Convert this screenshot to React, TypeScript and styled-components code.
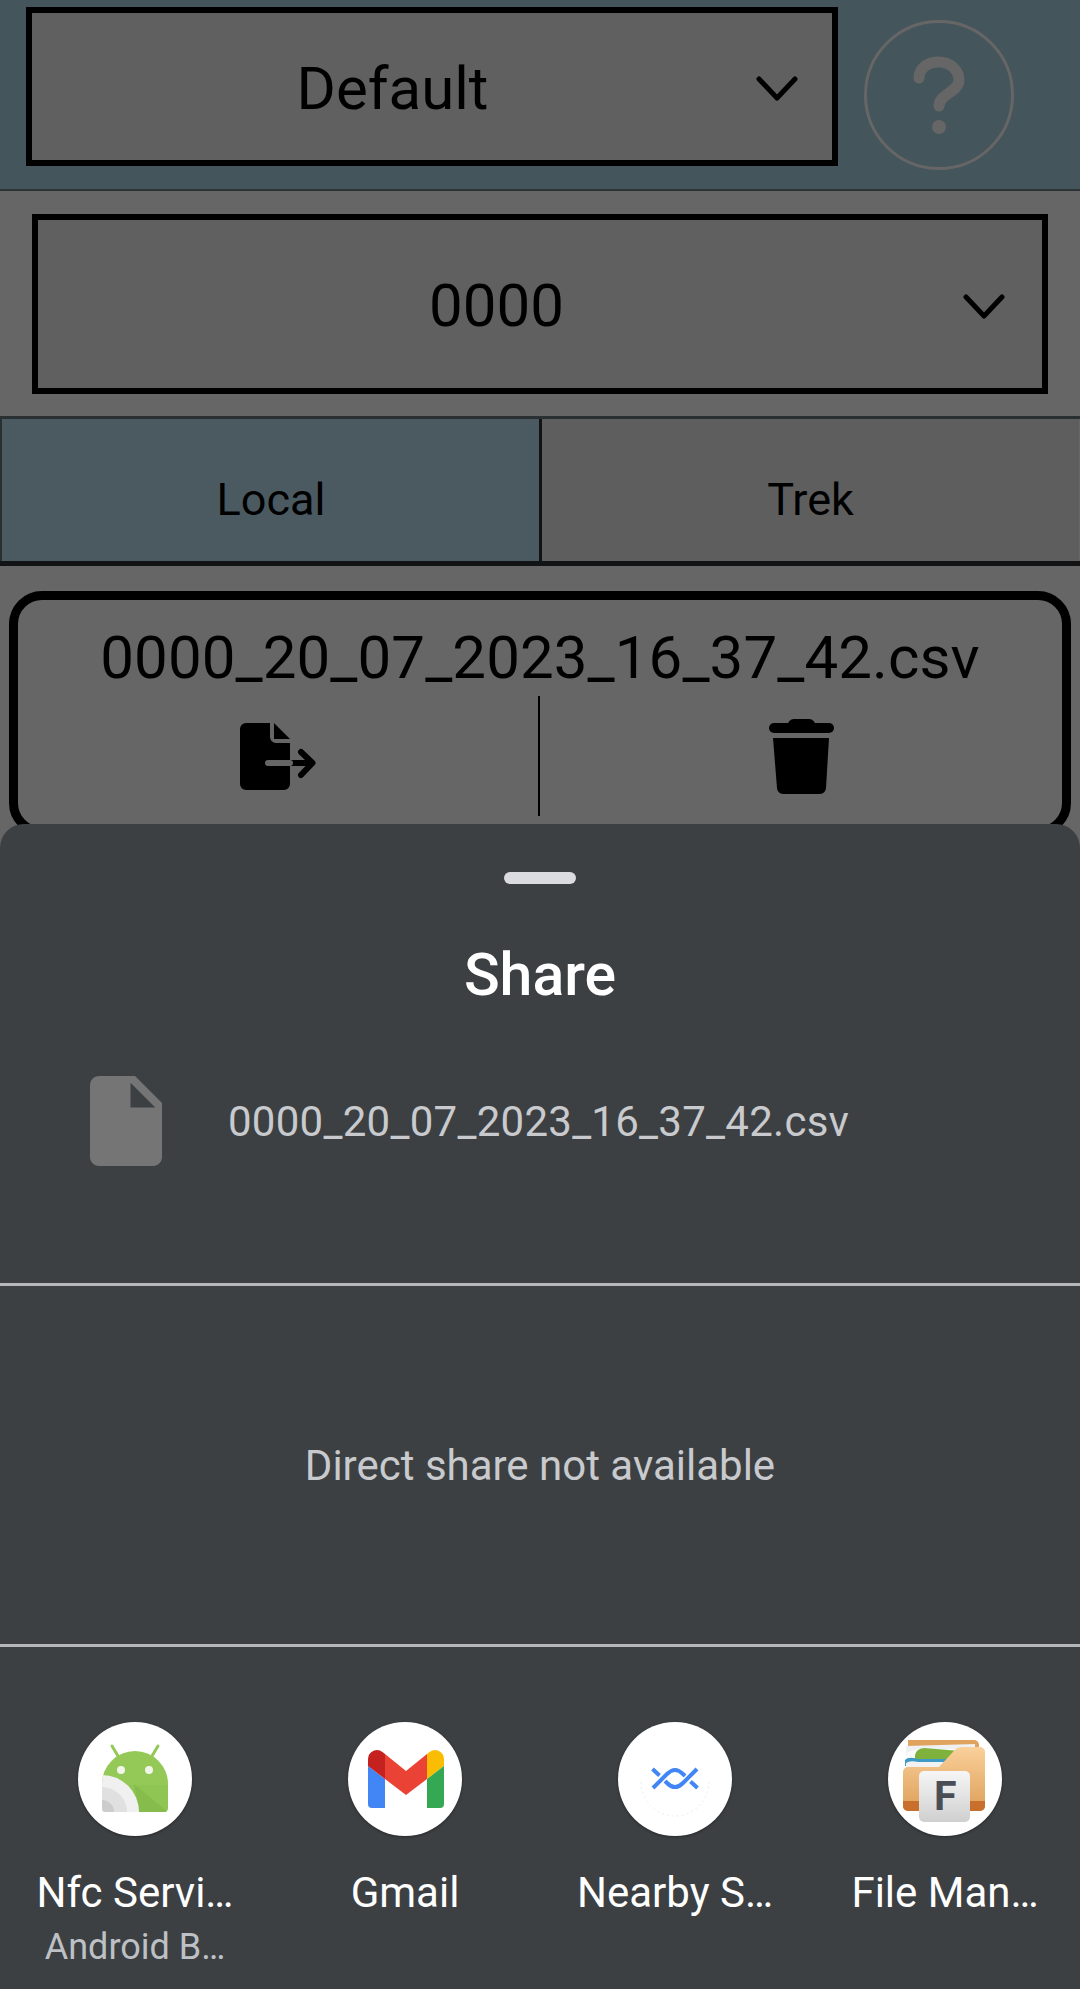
import React from 'react'
import styled, { createGlobalStyle } from 'styled-components'

const GlobalStyle = createGlobalStyle`
  html, body {
    margin: 0;
    padding: 0;
    background: #666666;
  }
  * {
    box-sizing: border-box;
  }
`

const Chevron = () => (
  <ChevronSvg viewBox="0 0 42 25">
    <path d="M3 3 L21 22 L39 3" fill="none" stroke="#000" strokeWidth="5" strokeLinecap="round" strokeLinejoin="round" />
  </ChevronSvg>
)

const QuestionIcon = () => (
  <svg width="144" height="144" viewBox="3 3 144 144">
    <path d="M55 58 C55 48 64 42 75 42 C86 42 95 50 95 60 C95 72 75 74 75 86" fill="none" stroke="#666" strokeWidth="11" strokeLinecap="round" />
    <circle cx="75" cy="107" r="7" fill="#666" />
  </svg>
)

const ExportIcon = () => (
  <svg width="76" height="68" viewBox="240 723 76 68">
    <path d="M246 723 H270 V737 a6 6 0 0 0 6 6 H290 V784 a6 6 0 0 1 -6 6 H246 a6 6 0 0 1 -6 -6 V729 a6 6 0 0 1 6 -6 Z" fill="#000" />
    <path d="M274 723 L290 739 H274 Z" fill="#000" />
    <path d="M290 763 H312 M301 752 L312.500 763 L301 775" fill="none" stroke="#000" strokeWidth="6" strokeLinecap="round" strokeLinejoin="round" />
    <path d="M268 763 H290" fill="none" stroke="#666" strokeWidth="6" strokeLinecap="round" />
    <rect x="286" y="760" width="4" height="6" fill="#666" />
  </svg>
)

const TrashIcon = () => (
  <svg width="66" height="76" viewBox="769 719 66 76">
    <path d="M788 726 a6 6 0 0 1 6 -7 H809 a6 6 0 0 1 6 7 Z" fill="#000" />
    <rect x="769" y="723" width="65" height="10" rx="5" fill="#000" />
    <path d="M773 738 H829 L826 788 a6 6 0 0 1 -6 6 H783 a6 6 0 0 1 -6 -6 Z" fill="#000" />
  </svg>
)

const DocIcon = () => (
  <svg width="72" height="90" viewBox="4 2 16 20">
    <path
      d="M6 2c-1.100 0-2 .9-2 2v16c0 1.100.9 2 2 2h12c1.100 0 2-.9 2-2V8l-6-6H6zm7 7V3.500L18.500 9H13z"
      fill="#757575"
    />
  </svg>
)

const AndroidIcon = () => (
  <svg width="114" height="114" viewBox="0 0 114 114">
    <defs>
      <clipPath id="robotBody">
        <path d="M24 62 a33 33 0 0 1 66 0 V86 a4 4 0 0 1 -4 4 H28 a4 4 0 0 1 -4 -4 Z" />
      </clipPath>
    </defs>
    <path d="M34 24 L40 34 M80 24 L74 34" stroke="#93c956" strokeWidth="3" strokeLinecap="round" />
    <g clipPath="url(#robotBody)">
      <rect x="24" y="29" width="66" height="34" fill="#94c957" />
      <rect x="24" y="63" width="66" height="27" fill="#8fc553" />
      <path d="M56 62 L90 90 H61 Z" fill="#86bc4b" />
      <circle cx="24" cy="90" r="37" fill="#f0f0f0" />
      <circle cx="24" cy="90" r="25" fill="#e0e0e0" />
      <circle cx="24" cy="90" r="12" fill="#cccccc" />
    </g>
    <circle cx="43" cy="48" r="4" fill="#f1f5ea" />
    <circle cx="71" cy="48" r="4" fill="#f1f5ea" />
  </svg>
)

const GmailIcon = () => (
  <svg width="114" height="114" viewBox="0 0 114 114">
    <path d="M20 44 L37 57 V86 H24 a4 4 0 0 1 -4 -4 Z" fill="#4285f4" />
    <path d="M20 44 V37 a9 9 0 0 1 14.500 -7 L37 32 V57 Z" fill="#c5221f" />
    <path d="M37 32 L58 49 L79 32 V57 L58 73 L37 57 Z" fill="#ea4335" />
    <path d="M79 32 L81.500 30 A9 9 0 0 1 96 37 V44 L79 57 Z" fill="#fbbc04" />
    <path d="M79 57 L96 44 V82 a4 4 0 0 1 -4 4 H79 Z" fill="#34a853" />
  </svg>
)

const NearbyIcon = () => (
  <svg width="114" height="114" viewBox="0 0 114 114">
    <path d="M23 60 A34 34 0 0 0 91 60" fill="none" stroke="#ececec" strokeWidth="1" strokeDasharray="2 3" />
    <g fill="none" stroke="#4285f4" strokeWidth="4">
      <path d="M35 66 L49 52 Q57 44 65 52 L67 54" />
      <path d="M79 47 L65 61 Q57 69 49 61 L47 59" />
      <path d="M34.500 47 L41.500 53.500 M72.500 59.500 L79.500 66" />
    </g>
  </svg>
)

const FileManagerIcon = () => (
  <svg width="114" height="114" viewBox="0 0 114 114">
    <defs>
      <linearGradient id="folderFront" x1="0" y1="0" x2="0" y2="1">
        <stop offset="0" stopColor="#fad09a" />
        <stop offset="1" stopColor="#dd9f59" />
      </linearGradient>
      <linearGradient id="tileFace" x1="0" y1="0" x2="0" y2="1">
        <stop offset="0" stopColor="#f6f6f6" />
        <stop offset="1" stopColor="#cfcfcf" />
      </linearGradient>
    </defs>
    <path d="M20 18 H86 a5 5 0 0 1 5 5 V40 H20 Z" fill="#dfa35e" />
    <path d="M18 24 L87 22 V34 H18 Z" fill="#eef0f1" />
    <path d="M19 30 L30 27 H78 V40 H19 Z" fill="#fafafa" />
    <path d="M27 33 Q28 27 36 26 L72 29 V40 H27 Z" fill="#7fb23d" />
    <path d="M17 38 Q20 34 30 37 H60 V44 H17 Z" fill="#3e9bc6" />
    <path d="M18 41 Q22 38 30 40 H60 V46 H18 Z" fill="#f2f2f2" />
    <path d="M15 50 a5 5 0 0 1 5 -5 H51 L64 31 Q68 25 74 25 H92 a5 5 0 0 1 5 5 V84 a5 5 0 0 1 -5 5 H20 a5 5 0 0 1 -5 -5 Z" fill="url(#folderFront)" />
    <path d="M15 79 H97 V84 a5 5 0 0 1 -5 5 H20 a5 5 0 0 1 -5 -5 Z" fill="#c96f2e" />
    <rect x="31" y="49" width="51" height="51" rx="5" fill="url(#tileFace)" />
    <text x="46" y="88" fontFamily="Roboto, sans-serif" fontSize="41" fontWeight="700" fill="#4a4e54">F</text>
  </svg>
)

const targets = [
  { icon: <AndroidIcon />, label: 'Nfc Servi…', sub: 'Android B…' },
  { icon: <GmailIcon />, label: 'Gmail' },
  { icon: <NearbyIcon />, label: 'Nearby S…' },
  { icon: <FileManagerIcon />, label: 'File Man…' },
]

const App = () => {
  return (
    <Page>
      <GlobalStyle />
      <Header>
        <Select $width={812} $height={159} $right={34} $textShift={9}>
          <SelectText>Default</SelectText>
          <Chevron />
        </Select>
        <HelpButton>
          <QuestionIcon />
        </HelpButton>
      </Header>

      <StationRow>
        <Select $width={1016} $height={180} $right={37} $textShift={14}>
          <SelectText>0000</SelectText>
          <Chevron />
        </Select>
      </StationRow>

      <Tabs>
        <Tab $active>Local</Tab>
        <Tab>Trek</Tab>
      </Tabs>

      <FileCard>
        <FileName>0000_20_07_2023_16_37_42.csv</FileName>
        <FileActions>
          <FileAction $left={222} $top={27}>
            <ExportIcon />
          </FileAction>
          <ActionDivider />
          <FileAction $left={229} $top={23}>
            <TrashIcon />
          </FileAction>
        </FileActions>
      </FileCard>

      <Sheet>
        <Handle />
        <SheetTitle>Share</SheetTitle>
        <PreviewRow>
          <DocIcon />
          <PreviewName>0000_20_07_2023_16_37_42.csv</PreviewName>
        </PreviewRow>
        <SheetLine />
        <DirectShare>Direct share not available</DirectShare>
        <SheetLine />
        <TargetGrid>
          {targets.map((target) => (
            <Target key={target.label}>
              <TargetCircle>{target.icon}</TargetCircle>
              <TargetLabel>{target.label}</TargetLabel>
              {target.sub && <TargetSub>{target.sub}</TargetSub>}
            </Target>
          ))}
        </TargetGrid>
      </Sheet>
    </Page>
  )
}

const Page = styled.div`
  position: relative;
  width: 1080px;
  height: 1989px;
  overflow: hidden;
  background: #666666;
  font-family: Roboto, "Noto Sans", sans-serif;
  color: #000;
`

const Header = styled.div`
  display: flex;
  align-items: flex-start;
  height: 191px;
  padding: 7px 0 0 26px;
  background: #45555c;
  border-bottom: 2px solid #2e3436;
`

const Select = styled.div<{ $width: number; $height: number; $right: number; $textShift: number }>`
  display: flex;
  align-items: center;
  width: ${({ $width }) => $width}px;
  height: ${({ $height }) => $height}px;
  padding: 4px ${({ $right }) => $right}px 0 6px;
  background: #606060;
  border: 6px solid #000;
  & > div {
    padding-right: ${({ $textShift }) => $textShift}px;
  }
`

const SelectText = styled.div`
  flex: 1;
  text-align: center;
  font-size: 60px;
  line-height: 70px;
`

const ChevronSvg = styled.svg`
  width: 42px;
  height: 25px;
`

const HelpButton = styled.div`
  width: 150px;
  height: 150px;
  margin: 13px 0 0 26px;
  border: 3px solid #666666;
  border-radius: 50%;
`

const StationRow = styled.div`
  padding: 23px 0 22px 32px;
`

const Tabs = styled.div`
  display: flex;
  height: 150px;
  border-top: 3px solid #2a2f31;
  border-bottom: 5px solid #111314;
`

const Tab = styled.div<{ $active?: boolean }>`
  display: flex;
  align-items: center;
  justify-content: center;
  width: 540px;
  padding-top: 19px;
  font-size: 45px;
  background: ${({ $active }) => ($active ? '#4a5a60' : '#5e5e5e')};
  border-left: 2px solid #2a2f31;
  &:last-child {
    border-left: 3px solid #111314;
    margin-left: -1px;
  }
`

const FileCard = styled.div`
  width: 1062px;
  height: 245px;
  margin: 25px 0 0 9px;
  background: #666666;
  border: 9px solid #000;
  border-radius: 33px;
`

const FileName = styled.div`
  text-align: center;
  font-size: 60px;
  letter-spacing: 0.1px;
  line-height: 70px;
  margin-top: 23px;
`

const FileActions = styled.div`
  display: flex;
  height: 120px;
  margin-top: 3px;
`

const FileAction = styled.div<{ $left: number; $top: number }>`
  flex: 0 0 520px;
  padding: ${({ $top }) => $top}px 0 0 ${({ $left }) => $left}px;
`

const ActionDivider = styled.div`
  width: 2px;
  height: 120px;
  background: #000;
`

const Sheet = styled.div`
  position: absolute;
  top: 824px;
  left: 0;
  width: 1080px;
  height: 1165px;
  padding-top: 48px;
  background: #3c4043;
  border-radius: 24px 24px 0 0;
`

const Handle = styled.div`
  width: 72px;
  height: 12px;
  margin: 0 auto;
  background: #dadce0;
  border-radius: 6px;
`

const SheetTitle = styled.div`
  margin-top: 59px;
  text-align: center;
  font-size: 59px;
  font-weight: 500;
  line-height: 64px;
  color: #fff;
`

const PreviewRow = styled.div`
  display: flex;
  align-items: center;
  gap: 66px;
  height: 90px;
  margin: 69px 0 117px;
  padding-left: 90px;
`

const PreviewName = styled.div`
  font-size: 42px;
  letter-spacing: 0.27px;
  color: #c8cacd;
`

const SheetLine = styled.div`
  height: 3px;
  background: #b5b7b8;
`

const DirectShare = styled.div`
  display: flex;
  align-items: center;
  justify-content: center;
  height: 358px;
  font-size: 42px;
  color: #c8cacd;
`

const TargetGrid = styled.div`
  display: grid;
  grid-template-columns: repeat(4, 270px);
  padding-top: 75px;
`

const Target = styled.div`
  display: flex;
  flex-direction: column;
  align-items: center;
`

const TargetCircle = styled.div`
  width: 114px;
  height: 114px;
  background: #fff;
  border-radius: 50%;
  box-shadow: 0 1px 3px rgba(0, 0, 0, 0.35);
`

const TargetLabel = styled.div`
  margin-top: 29px;
  font-size: 42px;
  line-height: 56px;
  color: #fff;
`

const TargetSub = styled.div`
  margin-top: 2px;
  font-size: 36px;
  line-height: 48px;
  color: #bdc1c6;
`

export default App
